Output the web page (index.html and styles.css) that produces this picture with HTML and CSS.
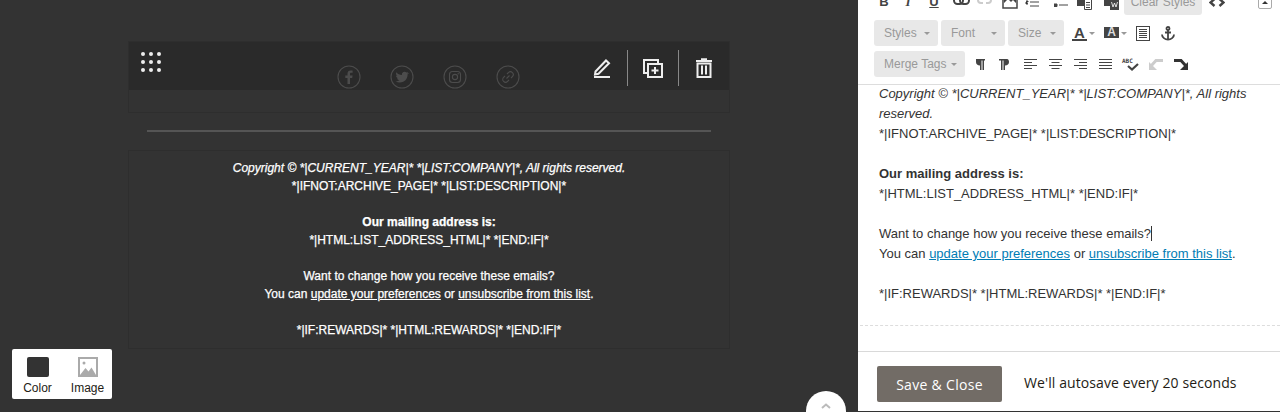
FILE: index.html
```html
<!DOCTYPE html>
<html lang="en">
<head>
<meta charset="utf-8">
<title>Footer editor</title>
<link rel="stylesheet" href="styles.css">
</head>
<body>
<div class="app">
  <main class="canvas">
    <section class="social-block">
      <div class="social-row">
        <svg class="social" viewBox="0 0 24 24"><circle cx="12" cy="12" r="11"/><path class="fill" d="M13 19v-6h2.200l.4-2.500H13V9c0-.8.3-1.200 1.200-1.200h1.400V5.500c-.5-.1-1.200-.1-2-.1-2 0-3.100 1.200-3.100 3.300v1.800H8.300V13h2.200v6z"/></svg>
        <svg class="social" viewBox="0 0 24 24"><circle cx="12" cy="12" r="11"/><path class="fill" d="M18.500 8c-.5.200-1 .4-1.500.4.500-.3 1-.8 1.200-1.400-.5.300-1.100.5-1.700.6a2.700 2.700 0 0 0-4.600 2.400C9.700 10 7.700 9 6.400 7.300c-.7 1.200-.4 2.800.8 3.600-.4 0-.9-.1-1.200-.3 0 1.300.9 2.400 2.100 2.700-.4.100-.8.100-1.200 0 .3 1.100 1.300 1.800 2.500 1.900-1.100.9-2.500 1.200-3.900 1.100 4.800 3 12.200.4 12.100-7 .5-.3 1-.8 1.400-1.300z"/></svg>
        <svg class="social" viewBox="0 0 24 24"><circle cx="12" cy="12" r="11"/><rect x="6.500" y="6.500" width="11" height="11" rx="3"/><circle cx="12" cy="12" r="2.600"/><circle class="fill" cx="15.200" cy="8.800" r=".7"/></svg>
        <svg class="social" viewBox="0 0 24 24"><circle cx="12" cy="12" r="11"/><path d="M10.500 13.500l3-3M11 9l1.400-1.400a2.700 2.700 0 0 1 4 4L15 13M13 15l-1.400 1.400a2.700 2.700 0 0 1-4-4L9 11"/></svg>
      </div>
      <div class="block-toolbar">
        <svg class="drag" width="22" height="22" viewBox="0 0 22 22"><g fill="#eee"><circle cx="3" cy="3" r="2"/><circle cx="11" cy="3" r="2"/><circle cx="19" cy="3" r="2"/><circle cx="3" cy="11" r="2"/><circle cx="11" cy="11" r="2"/><circle cx="19" cy="11" r="2"/><circle cx="3" cy="19" r="2"/><circle cx="11" cy="19" r="2"/><circle cx="19" cy="19" r="2"/></g></svg>
        <div class="tool-actions">
          <button class="tool-btn"><svg width="18" height="20" viewBox="0 0 18 20" fill="none" stroke="#eee" stroke-width="2"><path d="M2.500 13.500 13 2.500l3 2.700L5.500 15.800l-3.500.7z"/><path d="M1 19h16"/></svg></button>
          <button class="tool-btn"><svg width="20" height="19" viewBox="0 0 20 19" fill="none" stroke="#eee" stroke-width="2"><path d="M15 4V1H1v13h4"/><rect x="5" y="5" width="14" height="13" fill="#2a2a2a"/><path d="M12 8v7M8.500 11.500h7"/></svg></button>
          <button class="tool-btn"><svg width="16" height="20" viewBox="0 0 16 20" fill="none" stroke="#eee" stroke-width="2"><path d="M0 3h16M5 1.200h6"/><path d="M1.500 5.500h13V19h-13zM6 7.500v9M10 7.500v9"/></svg></button>
        </div>
      </div>
    </section>
    <hr class="divider">
    <section class="footer-block">
      <p><em>Copyright © *|CURRENT_YEAR|* *|LIST:COMPANY|*, All rights reserved.</em><br>*|IFNOT:ARCHIVE_PAGE|* *|LIST:DESCRIPTION|*</p>
      <p><strong>Our mailing address is:</strong><br>*|HTML:LIST_ADDRESS_HTML|* *|END:IF|*</p>
      <p>Want to change how you receive these emails?<br>You can <a href="#">update your preferences</a> or <a href="#">unsubscribe from this list</a>.</p>
      <p>*|IF:REWARDS|* *|HTML:REWARDS|* *|END:IF|*</p>
    </section>
    <div class="bg-picker">
      <div class="bg-option"><span class="swatch"></span><span>Color</span></div>
      <div class="bg-option"><svg width="20" height="20" viewBox="0 0 20 20"><rect x="1" y="1" width="18" height="18" fill="none" stroke="#aaa" stroke-width="2"/><circle cx="6" cy="6" r="1.500" fill="#aaa"/><path d="M2 18l5.500-7 3 3.500 3-4L18 18z" fill="#aaa"/></svg><span>Image</span></div>
    </div>
    <button class="scroll-top"><svg width="10" height="6" viewBox="0 0 10 6" fill="none" stroke="#bbb" stroke-width="2"><path d="M1 5l4-3.500L9 5"/></svg></button>
  </main>

  <aside class="panel">
    <div class="editor-toolbar">
      <div class="row row-one">
        <span class="ic ic-b">B</span><span class="ic ic-i">I</span><span class="ic ic-u">U</span>
        <svg class="ic-svg w1" width="17" height="9" viewBox="0 0 17 9" fill="none" stroke="#444" stroke-width="2"><rect x="1" y="1" width="9" height="7" rx="3.500"/><rect x="7" y="1" width="9" height="7" rx="3.500"/></svg>
        <svg class="ic-svg w2" width="15" height="9" viewBox="0 0 15 9" fill="none" stroke="#ccc" stroke-width="2"><path d="M6 1H4a3 3 0 0 0 0 6h2M9 1h2a3 3 0 0 1 0 6H9"/></svg>
        <svg class="ic-svg w3" width="16" height="14" viewBox="0 0 16 14"><path d="M1 0v13h14V0" fill="none" stroke="#444" stroke-width="1.500"/><path d="M2 1h12v7l-3-3-2 2-3-3-4 4z" fill="#444"/></svg>
        <svg class="ic-svg w4" width="14" height="12" viewBox="0 0 14 12" stroke="#444"><path d="M5 2h9M5 6h9M5 10h9M1 1v3M1 5h2v1H1v2h2"/></svg>
        <svg class="ic-svg w5" width="14" height="12" viewBox="0 0 14 12" stroke="#444"><path d="M5 2h9M5 9h9"/><path d="M0 1h3v2.500H0zM0 8h3v2.500H0z" fill="#444"/></svg>
        <svg class="ic-svg w6" width="15" height="15" viewBox="0 0 15 15"><path d="M0 0h12v3H7v8H0z" fill="#444"/><path d="M7.500 4.500h7v10h-7zM9 7.500h4M9 10h4M9 12.500h4" fill="none" stroke="#444"/></svg>
        <svg class="ic-svg w7" width="15" height="15" viewBox="0 0 15 15"><path d="M0 0h12v3H7v8H0z" fill="#444"/><rect x="6" y="4" width="9" height="11" fill="#444"/><path d="M7.500 7l1.500 5 1.500-4 1.500 4 1.500-5" fill="none" stroke="#fff" stroke-width=".8"/></svg>
        <span class="btn btn-clear">Clear Styles</span>
        <svg class="ic-svg w8" width="16" height="9" viewBox="0 0 16 9" fill="none" stroke="#444" stroke-width="2.400"><path d="M5.500 1 1.500 4.500 5.500 8M10.500 1l4 3.500-4 3.500"/></svg>
        <span class="collapse"><i></i></span>
      </div>
      <div class="row row-two">
        <span class="btn combo c-styles">Styles<b></b></span>
        <span class="btn combo c-font">Font<b></b></span>
        <span class="btn combo c-size">Size<b></b></span>
        <span class="color-a"><span class="glyph-a">A</span><b></b></span>
        <span class="color-bg"><span class="glyph-h">A</span><b></b></span>
        <svg width="14" height="15" viewBox="0 0 14 15" class="blocks" fill="none" stroke="#444"><rect x=".5" y=".5" width="13" height="14"/><path d="M3 3.500h8M3 5.500h8M3 7.500h8M3 9.500h8M3 11.500h8"/></svg>
        <svg width="14" height="15" viewBox="0 0 14 15" class="anchor" fill="none" stroke="#444" stroke-width="1.800"><circle cx="7" cy="2.500" r="1.500"/><path d="M7 4v10M4 6.500h6M1 8.500c0 3 3 5 6 5s6-2 6-5"/></svg>
      </div>
      <div class="row row-three">
        <span class="btn combo c-merge">Merge Tags<b></b></span>
        <svg class="w-par" width="9" height="11" viewBox="0 0 9 11"><path d="M0 0h9v1.500H8V11H6.500V1.500h-1V11H4V6.500C1.500 6.500 0 5 0 3z" fill="#444"/></svg>
        <svg class="w-rtl" width="10" height="11" viewBox="0 0 10 11"><path d="M0 0h8c1.500 0 2 1.500 2 3 0 2-1.500 3.500-4 3.500V11H4.500V1.500h-1V11H2V1.500H0z" fill="#444"/></svg>
        <svg class="al" width="13" height="11" viewBox="0 0 13 11" stroke="#444"><path d="M0 .5h13M0 3.500h8M0 6.500h13M0 9.500h8"/></svg>
        <svg class="al" width="13" height="11" viewBox="0 0 13 11" stroke="#444"><path d="M0 .5h13M2.500 3.500h8M0 6.500h13M2.500 9.500h8"/></svg>
        <svg class="al" width="13" height="11" viewBox="0 0 13 11" stroke="#444"><path d="M0 .5h13M5 3.500h8M0 6.500h13M5 9.500h8"/></svg>
        <svg class="al" width="13" height="11" viewBox="0 0 13 11" stroke="#444"><path d="M0 .5h13M0 3.500h13M0 6.500h13M0 9.500h13"/></svg>
        <span class="spell"><span class="abc">ABC</span><svg width="12" height="8" viewBox="0 0 12 8" fill="none" stroke="#444" stroke-width="2.200"><path d="M1 3l4 3.500L11 1"/></svg></span>
        <svg class="undo" width="14" height="11" viewBox="0 0 14 11"><path d="M14 1.500H7L2 7" fill="none" stroke="#ccc" stroke-width="3"/><path d="M0 3v8h8z" fill="#ccc"/></svg>
        <svg class="redo" width="14" height="11" viewBox="0 0 14 11"><path d="M0 1.500h7l5 5.500" fill="none" stroke="#333" stroke-width="3"/><path d="M14 3v8H6z" fill="#333"/></svg>
      </div>
    </div>
    <div class="editor-body">
      <div class="editor-text">
        <p><em>Copyright © *|CURRENT_YEAR|* *|LIST:COMPANY|*, All rights reserved.</em><br>*|IFNOT:ARCHIVE_PAGE|* *|LIST:DESCRIPTION|*</p>
        <p><strong>Our mailing address is:</strong><br>*|HTML:LIST_ADDRESS_HTML|* *|END:IF|*</p>
        <p>Want to change how you receive these emails?<span class="caret"></span><br>You can <a href="#">update your preferences</a> or <a href="#">unsubscribe from this list</a>.</p>
        <p>*|IF:REWARDS|* *|HTML:REWARDS|* *|END:IF|*</p>
      </div>
    </div>
    <div class="panel-footer">
      <button class="save">Save &amp; Close</button>
      <span class="autosave">We'll autosave every 20 seconds</span>
    </div>
  </aside>
</div>
</body>
</html>
```
FILE: styles.css
```css
* { box-sizing: border-box; }
html, body { margin: 0; height: 412px; overflow: hidden; }
body { font-family: "Liberation Sans", Arial, sans-serif; background: #333; }
.app { display: flex; height: 412px; }

/* Canvas */
.canvas { position: relative; width: 858px; flex: none; padding: 41px 128px 0; background: #333; overflow: hidden; }
.social-block { position: relative; width: 602px; height: 72px; border: 1px solid #2e2e2e; }
.social-row { position: relative; z-index: 1; display: flex; gap: 29px; padding: 23px 0 0 208px; }
.social { width: 24px; height: 24px; fill: none; stroke: #4c4c4c; stroke-width: 1.100; }
.social .fill { fill: #4c4c4c; stroke: none; }
.block-toolbar { position: absolute; top: 0; left: 0; right: 0; height: 48px; padding: 9px 0 0 11px; display: flex; justify-content: space-between; background: #2a2a2a; }
.drag { display: block; }
.tool-actions { position: relative; z-index: 2; display: flex; align-items: flex-start; margin-top: -1px; }
.tool-btn { width: 51px; height: 36px; padding: 0; background: none; border: 0; border-left: 1px solid #888; display: flex; align-items: center; justify-content: center; }
.tool-btn:first-child { border-left: 0; }
.divider { margin: 17px 19px 18px; height: 2px; border: 0; background: #555; }
.footer-block { width: 602px; height: 199px; padding: 8px 0 0; border: 1px solid #2e2e2e; color: #fff; text-align: center; font-size: 12px; line-height: 18px; -webkit-text-stroke: .25px #fff; }
.footer-block p { margin: 0 0 18px; }
.footer-block a { color: #fff; }
.bg-picker { position: absolute; left: 12px; top: 349px; width: 100px; height: 50px; background: #fff; border-radius: 2px; display: flex; padding: 8px 0 0 1px; }
.bg-option { width: 49px; display: flex; flex-direction: column; align-items: center; gap: 4px; font-size: 12px; line-height: 14px; color: #241c15; }
.bg-option:last-child { margin-left: 1px; }
.swatch { width: 22px; height: 20px; border-radius: 2px; background: #333; }
.scroll-top { position: absolute; left: 806px; top: 391px; width: 40px; height: 40px; padding: 12px 0 0; border: 0; border-radius: 50%; background: #fff; display: flex; justify-content: center; align-items: flex-start; }

/* Panel */
.panel { width: 422px; flex: none; height: 412px; background: #fff; display: flex; flex-direction: column; border-bottom: 1px solid #333; }
.editor-toolbar { position: relative; height: 85px; flex: none; border-bottom: 1px solid #ddd; padding-left: 16px; overflow: hidden; color: #444; }
.row { display: flex; align-items: center; height: 26px; }
.row-one { margin-top: -11px; }
.row-two { margin-top: 5px; }
.row-three { margin-top: 5px; }
.btn { display: inline-flex; align-items: center; height: 26px; border-radius: 3px; background: #e8e8e8; color: #999; font-size: 12px; }
.btn-clear { position: absolute; top: -11px; left: 266px; width: 78px; justify-content: center; }
.combo { padding-left: 10px; position: relative; }
.combo b, .color-a b, .color-bg b { position: absolute; width: 0; height: 0; border: 3px solid transparent; border-top-color: #999; border-bottom: 0; }
.combo b { right: 8px; top: 12px; }
.c-styles { width: 64px; }
.c-font { width: 64px; margin-left: 3px; }
.c-size { width: 56px; margin-left: 3px; }
.c-merge { width: 91px; }
.ic { width: 24px; text-align: center; font-size: 13px; line-height: 16px; flex: none; margin-bottom: 1px; }
.ic-b { font-weight: bold; width: 24px; margin-left: -2px; }
.ic-i { font-family: "Liberation Serif", serif; font-style: italic; font-weight: bold; width: 24px; }
.ic-u { text-decoration: underline; font-weight: bold; width: 28px; }
.w1 { margin-left: 5px; margin-bottom: 4px; }
.w2 { margin-left: 7px; margin-bottom: 4px; }
.w3 { margin-left: 10px; }
.w4 { margin-left: 7px; }
.w5 { margin-left: 15px; }
.w6 { margin-left: 9px; }
.w7 { margin-left: 12px; }
.w8 { position: absolute; left: 351px; top: -2px; }
.collapse { position: absolute; left: 400px; top: -5px; width: 14px; height: 14px; border: 1px solid #aaa; border-radius: 2px; }
.collapse i { position: absolute; left: 3px; top: 5px; width: 0; height: 0; border: 3px solid transparent; border-bottom: 3px solid #333; border-top: 0; }
.color-a, .color-bg { position: relative; display: inline-block; height: 26px; }
.color-a { width: 23px; margin-left: 8px; }
.color-bg { width: 23px; margin-left: 9px; }
.color-a b { right: 0; top: 12px; }
.color-bg b { right: 0; top: 12px; }
.glyph-a { position: absolute; left: 0; top: 6px; width: 15px; height: 15px; font-weight: bold; font-size: 15px; line-height: 13px; text-align: center; border-bottom: 2px solid #444; }
.glyph-h { position: absolute; left: 0; top: 7px; width: 15px; height: 11px; background: #444; color: #ddd; font-weight: bold; font-size: 12px; line-height: 11px; text-align: center; }
.blocks { margin-left: 9px; }
.anchor { margin-left: 11px; }
.w-par { margin-left: 11px; }
.w-rtl { margin-left: 14px; }
.al { margin-left: 12px; }
.w-rtl + .al { margin-left: 15px; }
.spell { position: relative; display: inline-block; width: 17px; height: 14px; margin-left: 10px; }
.abc { position: absolute; left: 0; top: 0; font-size: 6px; line-height: 7px; font-family: "DejaVu Sans Mono", monospace; font-weight: bold; }
.spell svg { position: absolute; right: 0; bottom: 0; }
.undo { margin-left: 10px; }
.redo { margin-left: 11px; }

.editor-body { flex: 1; overflow: hidden; padding-left: 2px; border-bottom: 1px solid #d9d9d9; }
.editor-text { height: 242px; margin-top: -1px; padding: 0 22px 0 19px; border-bottom: 1px dashed #ddd; font-size: 13px; line-height: 20px; color: #333; }
.editor-text p { margin: 0 0 20px; }
.editor-text a { color: #007cb4; }
.caret { display: inline-block; width: 1px; height: 15px; background: #333; vertical-align: -3px; }

.panel-footer { height: 59px; flex: none; padding: 14px 0 0 19px; display: flex; align-items: flex-start; gap: 22px; }
.save { width: 125px; height: 36px; border: 0; border-radius: 2px; background: #726c66; color: #fff; font-family: "Open Sans", sans-serif; font-size: 14px; font-weight: 500; letter-spacing: .3px; }
.autosave { font-family: "Open Sans", sans-serif; font-size: 14px; line-height: 33px; letter-spacing: .1px; color: #241c15; }
```
